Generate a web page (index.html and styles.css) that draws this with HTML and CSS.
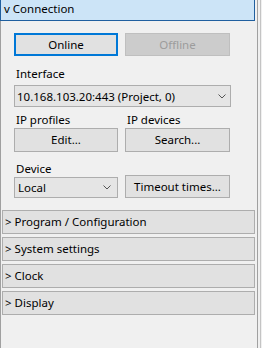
FILE: index.html
```html
<!DOCTYPE html>
<html>
<head>
<meta charset="utf-8">
<link rel="stylesheet" href="styles.css">
</head>
<body>
<div class="window">
  <div class="panel">
    <div class="header">v Connection</div>
    <div class="body">
      <div class="content">
        <div class="grid2 row-top">
          <button class="btn btn-focus">Online</button>
          <button class="btn btn-disabled">Offline</button>
        </div>
        <div class="label label-interface">Interface</div>
        <div class="select select-wide">
          <span>10.168.103.20:443 (Project, 0)</span>
          <svg class="chev" width="8" height="5" viewBox="0 0 8 5"><path d="M0.5 0.5 L4 4 L7.5 0.5" fill="none" stroke="#555" stroke-width="1"/></svg>
        </div>
        <div class="grid2 row-ip">
          <div class="col">
            <div class="label">IP profiles</div>
            <button class="btn btn-tall">Edit...</button>
          </div>
          <div class="col">
            <div class="label">IP devices</div>
            <button class="btn btn-tall">Search...</button>
          </div>
        </div>
        <div class="grid2 row-device">
          <div class="col">
            <div class="label">Device</div>
            <div class="select select-small">
              <span>Local</span>
              <svg class="chev" width="8" height="5" viewBox="0 0 8 5"><path d="M0.5 0.5 L4 4 L7.5 0.5" fill="none" stroke="#555" stroke-width="1"/></svg>
            </div>
          </div>
          <div class="col col-end">
            <button class="btn btn-timeout">Timeout times...</button>
          </div>
        </div>
      </div>
      <div class="sections">
        <div class="section">&gt; Program / Configuration</div>
        <div class="section">&gt; System settings</div>
        <div class="section">&gt; Clock</div>
        <div class="section">&gt; Display</div>
      </div>
    </div>
  </div>
  <div class="edge"></div>
</div>
</body>
</html>
```
FILE: styles.css
```css
html, body {
  margin: 0;
  padding: 0;
  background: #f0f0f0;
}
body {
  font-family: "Noto Sans", "Open Sans", sans-serif;
  font-size: 11.5px;
  color: #000;
  width: 262px;
  height: 348px;
  overflow: hidden;
}
.window {
  display: flex;
  gap: 2px;
  height: 348px;
}
.panel {
  width: 258px;
  box-sizing: border-box;
  border-right: 1px solid #a0a0a0;
  display: flex;
  flex-direction: column;
  height: 348px;
}
.edge {
  width: 1px;
  height: 348px;
  background: #c4c4c4;
}
.header {
  width: 255px;
  height: 21px;
  box-sizing: border-box;
  background: #cce4f7;
  border-left: 1px solid #1f5f9f;
  border-right: 1px solid #1f5f9f;
  border-bottom: 1px solid #1f5f9f;
  padding-left: 3px;
  line-height: 18px;
  white-space: nowrap;
}
.body {
  flex: 1;
  border-left: 1px solid #a0a0a0;
}
.content {
  margin-left: 13px;
  width: 217px;
  display: flex;
  flex-direction: column;
}
.grid2 {
  display: grid;
  grid-template-columns: 104px 105px;
  column-gap: 7px;
}
.col {
  display: flex;
  flex-direction: column;
}
.col-end {
  justify-content: flex-end;
}
.row-top {
  margin-top: 12px;
}
.label {
  height: 15px;
  line-height: 15px;
  padding-left: 2px;
  white-space: nowrap;
}
.label-interface {
  margin-top: 10px;
}
.btn {
  font: inherit;
  color: #000;
  background: #e1e1e1;
  border: 1px solid #adadad;
  height: 23px;
  padding: 0;
  margin: 0;
  box-sizing: border-box;
  text-align: center;
  line-height: 20px;
  white-space: nowrap;
}
.btn-focus {
  border: 2px solid #0078d7;
  line-height: 18px;
}
.btn-disabled {
  background: #cccccc;
  border-color: #bfbfbf;
  color: #9c9c9c;
}
.btn-tall {
  height: 24px;
  margin-top: 1px;
}
.btn-timeout {
  height: 23px;
}
.select {
  display: flex;
  align-items: center;
  justify-content: space-between;
  box-sizing: border-box;
  background: #e5e5e5;
  border: 1px solid #adadad;
  white-space: nowrap;
}
.select-wide {
  margin-top: 4px;
  height: 22px;
  width: 217px;
  padding: 0 4px 0 2px;
}
.select-small {
  margin-top: 1px;
  height: 21px;
  padding: 0 6px 0 3px;
}
.chev {
  display: block;
  flex: none;
}
.row-ip {
  margin-top: 5px;
}
.row-device {
  margin-top: 9px;
}
.sections {
  margin-top: 12px;
  margin-left: 1px;
  width: 253px;
  display: flex;
  flex-direction: column;
  gap: 3px;
}
.section {
  height: 24px;
  box-sizing: border-box;
  background: #e1e1e1;
  border: 1px solid #adadad;
  padding-left: 2px;
  line-height: 21px;
  white-space: nowrap;
}
```
